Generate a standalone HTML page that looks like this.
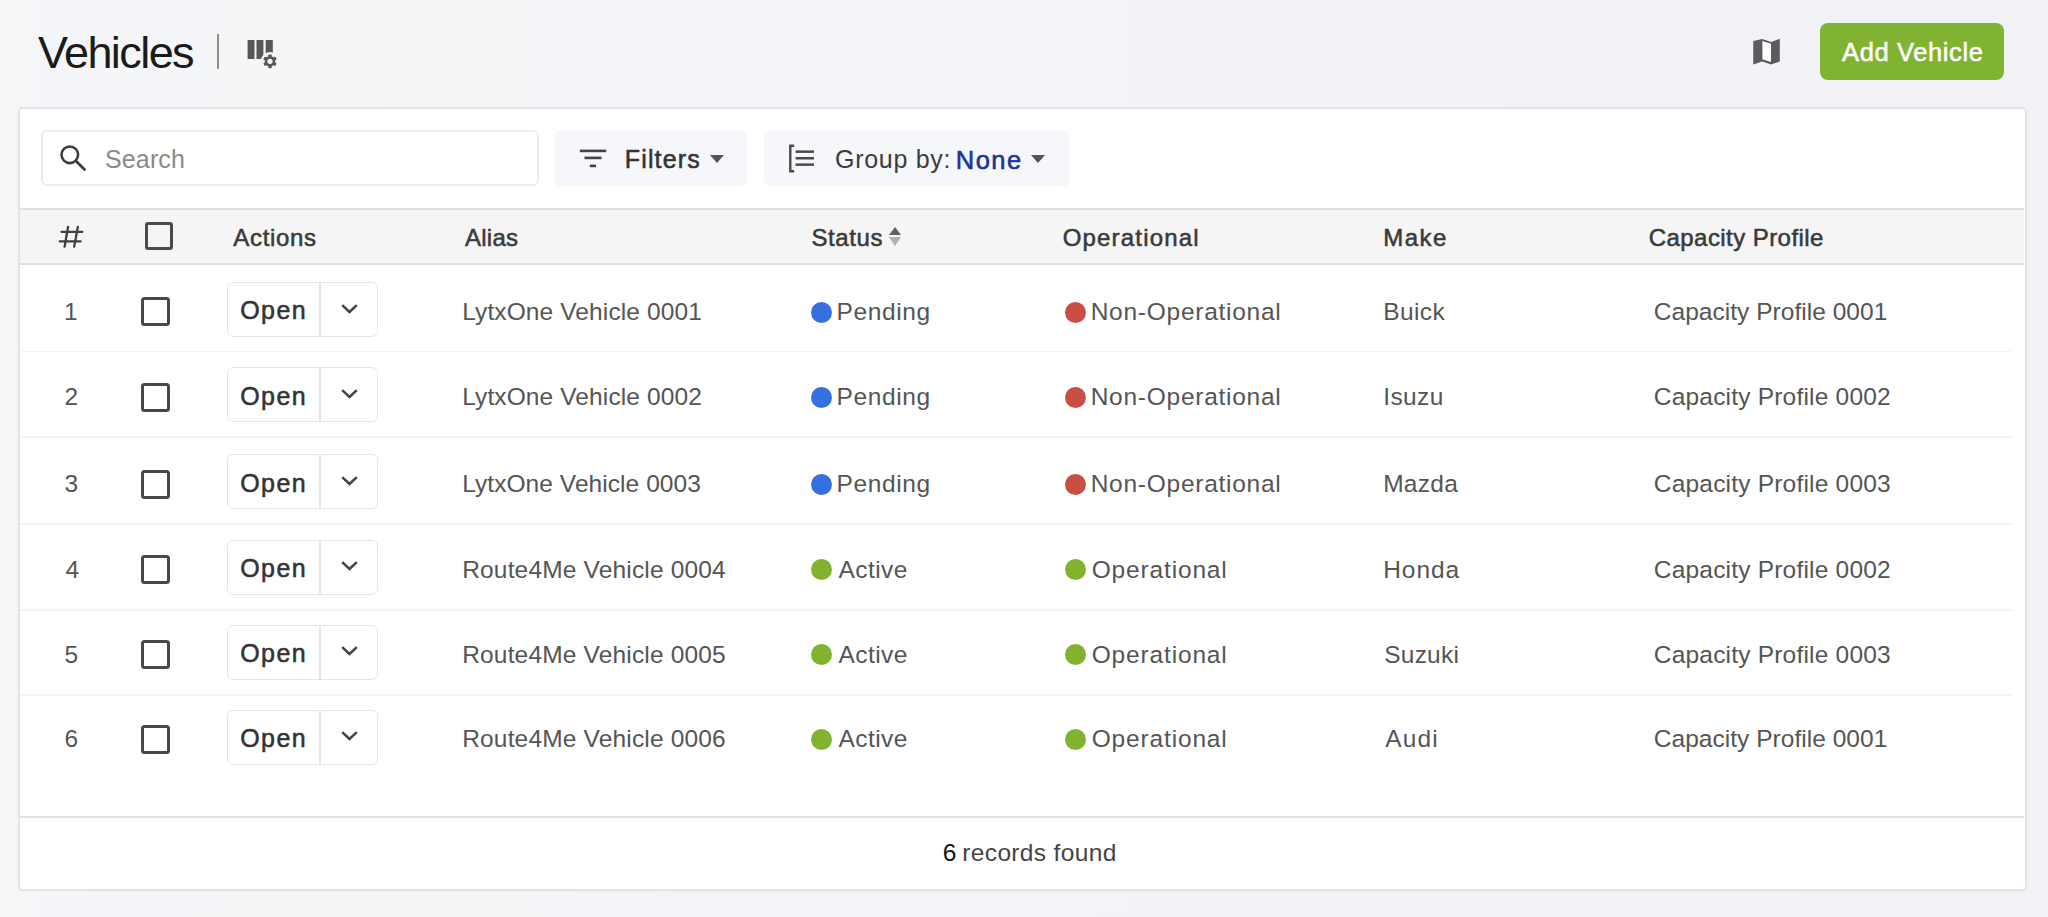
<!DOCTYPE html>
<html><head><meta charset="utf-8"><title>Vehicles</title>
<style>
html,body{margin:0;padding:0}
body{width:2048px;height:917px;overflow:hidden;position:relative;background:linear-gradient(90deg,#f5f6f8,#f1f2f6);font-family:"Liberation Sans",sans-serif}
.t{position:absolute;white-space:nowrap;line-height:1.117}
</style></head><body>
<div style="position:absolute;left:217px;top:34px;width:2px;height:35px;background:#8d8d8d"></div>
<svg style="position:absolute;left:245px;top:38px" width="36" height="34" viewBox="0 0 36 34">
<rect x="2.6" y="2" width="6.9" height="19" fill="#58585a"/><rect x="11.5" y="2" width="6.9" height="19" fill="#58585a"/><rect x="20.7" y="2" width="7.1" height="19" fill="#58585a"/>
<circle cx="25" cy="23.3" r="9.2" fill="#f5f6f8"/>
<g transform="translate(25,23.3)" fill="#58585a"><circle r="5.2"/><rect x="-1.7" y="-6.9" width="3.4" height="13.8" rx="0.8"/><rect x="-1.7" y="-6.9" width="3.4" height="13.8" rx="0.8" transform="rotate(60)"/><rect x="-1.7" y="-6.9" width="3.4" height="13.8" rx="0.8" transform="rotate(120)"/><circle r="2.6" fill="#f5f6f8"/></g>
</svg>
<svg style="position:absolute;left:1750px;top:35px" width="33" height="33" viewBox="0 0 33 33">
<path d="M3.25 6 L12.2 3.9 L21.1 6.9 L29.8 3.7 L29.8 26.6 L21.1 29.4 L12.2 26.6 L3.25 29.4 Z" fill="#5a5c62"/>
<path d="M12.4 5.9 L21 8.7 L21 27.1 L12.4 24.3 Z" fill="#fdfdfd"/>
</svg>
<div style="position:absolute;left:1820px;top:23px;width:184px;height:57px;border-radius:8px;background:#81b332"></div>
<div style="position:absolute;left:18px;top:107px;width:2005px;height:780px;border:2px solid #e3e4e8;border-radius:5px;background:#fff;box-shadow:0 1px 2px rgba(0,0,0,0.03)"></div>
<div style="position:absolute;left:41px;top:130px;width:494px;height:52px;border:2px solid #ececec;border-radius:6px;background:#fff"></div>
<svg style="position:absolute;left:56px;top:142px" width="34" height="32" viewBox="0 0 34 32">
<circle cx="13.8" cy="12.8" r="8.3" fill="none" stroke="#3d3d3d" stroke-width="2.6"/>
<line x1="20.5" y1="19.5" x2="28.5" y2="27.5" stroke="#3d3d3d" stroke-width="2.8" stroke-linecap="round"/>
</svg>
<div style="position:absolute;left:554px;top:130px;width:193px;height:56px;border-radius:6px;background:#f6f7fa"></div>
<svg style="position:absolute;left:578px;top:148px" width="30" height="21" viewBox="0 0 30 21">
<rect x="1.8" y="1.6" width="26.4" height="2.6" fill="#444"/><rect x="6.5" y="8.6" width="17" height="2.6" fill="#444"/><rect x="11.8" y="16.6" width="6.2" height="2.6" fill="#444"/>
</svg>
<svg style="position:absolute;left:710px;top:155px" width="14" height="8" viewBox="0 0 14 8"><path d="M0 0 L14 0 L7 8 Z" fill="#555"/></svg>
<div style="position:absolute;left:764px;top:130px;width:306px;height:56px;border-radius:6px;background:#f6f7fa"></div>
<svg style="position:absolute;left:787px;top:144px" width="30" height="30" viewBox="0 0 30 30">
<path d="M7.2 1.8 L3.3 1.8 L3.3 27.2 L7.2 27.2" fill="none" stroke="#4a4a4a" stroke-width="2.4"/>
<rect x="8.6" y="6.4" width="18.4" height="2.5" fill="#4a4a4a"/><rect x="8.6" y="13" width="18.4" height="2.5" fill="#4a4a4a"/><rect x="8.6" y="19.4" width="18.4" height="2.5" fill="#4a4a4a"/>
</svg>
<svg style="position:absolute;left:1031px;top:155px" width="14" height="8" viewBox="0 0 14 8"><path d="M0 0 L14 0 L7 8 Z" fill="#555"/></svg>
<div style="position:absolute;left:20px;top:208px;width:2004px;height:57px;background:#f5f5f5;border-top:2px solid #dfdfdf;border-bottom:2px solid #dfdfdf;box-sizing:border-box"></div>
<svg style="position:absolute;left:58px;top:225px" width="26" height="24" viewBox="0 0 26 24">
<g stroke="#3f3f3f" stroke-width="2.3" stroke-linecap="round" fill="none">
<line x1="10.1" y1="1.8" x2="6.6" y2="21.6"/><line x1="19.9" y1="1.8" x2="16.2" y2="21.6"/>
<line x1="3.5" y1="6.8" x2="24.3" y2="6.8"/><line x1="1.8" y1="16.4" x2="22.6" y2="16.4"/></g></svg>
<div style="position:absolute;left:144.5px;top:221.5px;width:22px;height:22px;border:3px solid #4a4a4a;border-radius:3px"></div>
<svg style="position:absolute;left:888px;top:226px" width="14" height="21" viewBox="0 0 14 21"><path d="M1 9 L7 1 L13 9 Z" fill="#606060"/><path d="M1 11 L13 11 L7 20 Z" fill="#b0b0b0"/></svg>
<div style="position:absolute;left:141px;top:297.3px;width:23px;height:23px;border:3px solid #484848;border-radius:3.5px"></div>
<div style="position:absolute;left:227px;top:282.1px;width:149px;height:53px;border:1.5px solid #e6e6e6;border-radius:6px;background:#fff"></div>
<div style="position:absolute;left:319px;top:283.1px;width:1.5px;height:53px;background:#e6e6e6"></div>
<svg style="position:absolute;left:340px;top:302.6px" width="19" height="11" viewBox="0 0 19 11"><path d="M2.2 2.2 L9.5 9 L16.8 2.2" fill="none" stroke="#444" stroke-width="2.5"/></svg>
<div style="position:absolute;left:811px;top:301.6px;width:21px;height:21px;border-radius:50%;background:#3570e0"></div>
<div style="position:absolute;left:1065px;top:301.6px;width:21px;height:21px;border-radius:50%;background:#c94f45"></div>
<div style="position:absolute;left:141px;top:382.6px;width:23px;height:23px;border:3px solid #484848;border-radius:3.5px"></div>
<div style="position:absolute;left:227px;top:367.4px;width:149px;height:53px;border:1.5px solid #e6e6e6;border-radius:6px;background:#fff"></div>
<div style="position:absolute;left:319px;top:368.4px;width:1.5px;height:53px;background:#e6e6e6"></div>
<svg style="position:absolute;left:340px;top:387.9px" width="19" height="11" viewBox="0 0 19 11"><path d="M2.2 2.2 L9.5 9 L16.8 2.2" fill="none" stroke="#444" stroke-width="2.5"/></svg>
<div style="position:absolute;left:811px;top:386.9px;width:21px;height:21px;border-radius:50%;background:#3570e0"></div>
<div style="position:absolute;left:1065px;top:386.9px;width:21px;height:21px;border-radius:50%;background:#c94f45"></div>
<div style="position:absolute;left:141px;top:469.6px;width:23px;height:23px;border:3px solid #484848;border-radius:3.5px"></div>
<div style="position:absolute;left:227px;top:454.4px;width:149px;height:53px;border:1.5px solid #e6e6e6;border-radius:6px;background:#fff"></div>
<div style="position:absolute;left:319px;top:455.4px;width:1.5px;height:53px;background:#e6e6e6"></div>
<svg style="position:absolute;left:340px;top:474.9px" width="19" height="11" viewBox="0 0 19 11"><path d="M2.2 2.2 L9.5 9 L16.8 2.2" fill="none" stroke="#444" stroke-width="2.5"/></svg>
<div style="position:absolute;left:811px;top:473.9px;width:21px;height:21px;border-radius:50%;background:#3570e0"></div>
<div style="position:absolute;left:1065px;top:473.9px;width:21px;height:21px;border-radius:50%;background:#c94f45"></div>
<div style="position:absolute;left:141px;top:555.1px;width:23px;height:23px;border:3px solid #484848;border-radius:3.5px"></div>
<div style="position:absolute;left:227px;top:539.9px;width:149px;height:53px;border:1.5px solid #e6e6e6;border-radius:6px;background:#fff"></div>
<div style="position:absolute;left:319px;top:540.9px;width:1.5px;height:53px;background:#e6e6e6"></div>
<svg style="position:absolute;left:340px;top:560.4px" width="19" height="11" viewBox="0 0 19 11"><path d="M2.2 2.2 L9.5 9 L16.8 2.2" fill="none" stroke="#444" stroke-width="2.5"/></svg>
<div style="position:absolute;left:811px;top:559.4px;width:21px;height:21px;border-radius:50%;background:#82b330"></div>
<div style="position:absolute;left:1065px;top:559.4px;width:21px;height:21px;border-radius:50%;background:#82b330"></div>
<div style="position:absolute;left:141px;top:640.0px;width:23px;height:23px;border:3px solid #484848;border-radius:3.5px"></div>
<div style="position:absolute;left:227px;top:624.8px;width:149px;height:53px;border:1.5px solid #e6e6e6;border-radius:6px;background:#fff"></div>
<div style="position:absolute;left:319px;top:625.8px;width:1.5px;height:53px;background:#e6e6e6"></div>
<svg style="position:absolute;left:340px;top:645.3px" width="19" height="11" viewBox="0 0 19 11"><path d="M2.2 2.2 L9.5 9 L16.8 2.2" fill="none" stroke="#444" stroke-width="2.5"/></svg>
<div style="position:absolute;left:811px;top:644.3px;width:21px;height:21px;border-radius:50%;background:#82b330"></div>
<div style="position:absolute;left:1065px;top:644.3px;width:21px;height:21px;border-radius:50%;background:#82b330"></div>
<div style="position:absolute;left:141px;top:724.7px;width:23px;height:23px;border:3px solid #484848;border-radius:3.5px"></div>
<div style="position:absolute;left:227px;top:709.5px;width:149px;height:53px;border:1.5px solid #e6e6e6;border-radius:6px;background:#fff"></div>
<div style="position:absolute;left:319px;top:710.5px;width:1.5px;height:53px;background:#e6e6e6"></div>
<svg style="position:absolute;left:340px;top:730.0px" width="19" height="11" viewBox="0 0 19 11"><path d="M2.2 2.2 L9.5 9 L16.8 2.2" fill="none" stroke="#444" stroke-width="2.5"/></svg>
<div style="position:absolute;left:811px;top:729.0px;width:21px;height:21px;border-radius:50%;background:#82b330"></div>
<div style="position:absolute;left:1065px;top:729.0px;width:21px;height:21px;border-radius:50%;background:#82b330"></div>
<div style="position:absolute;left:20px;top:350.7px;width:1992px;height:1.5px;background:#f4f4f4"></div>
<div style="position:absolute;left:20px;top:436.2px;width:1992px;height:1.5px;background:#f4f4f4"></div>
<div style="position:absolute;left:20px;top:523.0px;width:1992px;height:1.5px;background:#f4f4f4"></div>
<div style="position:absolute;left:20px;top:609.1px;width:1992px;height:1.5px;background:#f4f4f4"></div>
<div style="position:absolute;left:20px;top:694.3px;width:1992px;height:1.5px;background:#f4f4f4"></div>
<div style="position:absolute;left:20px;top:815.5px;width:2004px;height:2px;background:#e3e3e6"></div>
<div class="t" style="left:38.00px;top:27.87px;font-size:45px;font-weight:400;color:#1b1b1b;letter-spacing:-1.571px;">Vehicles</div>
<div class="t" style="left:1842.00px;top:38.22px;font-size:25.5px;font-weight:400;color:#ffffff;letter-spacing:0.620px;-webkit-text-stroke:0.55px #ffffff;">Add Vehicle</div>
<div class="t" style="left:105.00px;top:146.38px;font-size:25px;font-weight:400;color:#8a8a8a;letter-spacing:0.140px;">Search</div>
<div class="t" style="left:624.70px;top:146.18px;font-size:25px;font-weight:400;color:#333;letter-spacing:1.183px;-webkit-text-stroke:0.55px #333;">Filters</div>
<div class="t" style="left:835.10px;top:145.97px;font-size:25px;font-weight:400;color:#3c3c3c;letter-spacing:0.700px;">Group by:</div>
<div class="t" style="left:955.80px;top:145.72px;font-size:25.5px;font-weight:400;color:#1b3598;letter-spacing:1.467px;-webkit-text-stroke:0.6px #1b3598;">None</div>
<div class="t" style="left:233.30px;top:224.88px;font-size:24px;font-weight:400;color:#3a3a3a;letter-spacing:0.683px;-webkit-text-stroke:0.55px #3a3a3a;">Actions</div>
<div class="t" style="left:465.00px;top:224.88px;font-size:24px;font-weight:400;color:#3a3a3a;letter-spacing:0.250px;-webkit-text-stroke:0.55px #3a3a3a;">Alias</div>
<div class="t" style="left:811.50px;top:224.88px;font-size:24px;font-weight:400;color:#3a3a3a;letter-spacing:0.580px;-webkit-text-stroke:0.55px #3a3a3a;">Status</div>
<div class="t" style="left:1062.70px;top:224.88px;font-size:24px;font-weight:400;color:#3a3a3a;letter-spacing:1.180px;-webkit-text-stroke:0.55px #3a3a3a;">Operational</div>
<div class="t" style="left:1383.20px;top:224.88px;font-size:24px;font-weight:400;color:#3a3a3a;letter-spacing:1.500px;-webkit-text-stroke:0.55px #3a3a3a;">Make</div>
<div class="t" style="left:1648.80px;top:224.88px;font-size:24px;font-weight:400;color:#3a3a3a;letter-spacing:0.433px;-webkit-text-stroke:0.55px #3a3a3a;">Capacity Profile</div>
<div class="t" style="left:64.00px;top:297.93px;font-size:24.5px;font-weight:400;color:#555;letter-spacing:0.000px;">1</div>
<div class="t" style="left:240.30px;top:297.48px;font-size:25px;font-weight:400;color:#333;letter-spacing:1.367px;-webkit-text-stroke:0.55px #333;">Open</div>
<div class="t" style="left:462.20px;top:297.93px;font-size:24.5px;font-weight:400;color:#555;letter-spacing:0.116px;">LytxOne Vehicle 0001</div>
<div class="t" style="left:836.50px;top:297.93px;font-size:24.5px;font-weight:400;color:#555;letter-spacing:0.633px;">Pending</div>
<div class="t" style="left:1090.70px;top:297.93px;font-size:24.5px;font-weight:400;color:#555;letter-spacing:0.736px;">Non-Operational</div>
<div class="t" style="left:1383.20px;top:297.93px;font-size:24.5px;font-weight:400;color:#555;letter-spacing:0.400px;">Buick</div>
<div class="t" style="left:1653.80px;top:297.93px;font-size:24.5px;font-weight:400;color:#555;letter-spacing:0.030px;">Capacity Profile 0001</div>
<div class="t" style="left:64.50px;top:383.23px;font-size:24.5px;font-weight:400;color:#555;letter-spacing:0.000px;">2</div>
<div class="t" style="left:240.30px;top:382.77px;font-size:25px;font-weight:400;color:#333;letter-spacing:1.367px;-webkit-text-stroke:0.55px #333;">Open</div>
<div class="t" style="left:462.20px;top:383.23px;font-size:24.5px;font-weight:400;color:#555;letter-spacing:0.116px;">LytxOne Vehicle 0002</div>
<div class="t" style="left:836.50px;top:383.23px;font-size:24.5px;font-weight:400;color:#555;letter-spacing:0.633px;">Pending</div>
<div class="t" style="left:1090.70px;top:383.23px;font-size:24.5px;font-weight:400;color:#555;letter-spacing:0.736px;">Non-Operational</div>
<div class="t" style="left:1383.20px;top:383.23px;font-size:24.5px;font-weight:400;color:#555;letter-spacing:0.400px;">Isuzu</div>
<div class="t" style="left:1653.80px;top:383.23px;font-size:24.5px;font-weight:400;color:#555;letter-spacing:0.200px;">Capacity Profile 0002</div>
<div class="t" style="left:64.50px;top:470.23px;font-size:24.5px;font-weight:400;color:#555;letter-spacing:0.000px;">3</div>
<div class="t" style="left:240.30px;top:469.77px;font-size:25px;font-weight:400;color:#333;letter-spacing:1.367px;-webkit-text-stroke:0.55px #333;">Open</div>
<div class="t" style="left:462.20px;top:470.23px;font-size:24.5px;font-weight:400;color:#555;letter-spacing:0.063px;">LytxOne Vehicle 0003</div>
<div class="t" style="left:836.50px;top:470.23px;font-size:24.5px;font-weight:400;color:#555;letter-spacing:0.633px;">Pending</div>
<div class="t" style="left:1090.70px;top:470.23px;font-size:24.5px;font-weight:400;color:#555;letter-spacing:0.736px;">Non-Operational</div>
<div class="t" style="left:1383.20px;top:470.23px;font-size:24.5px;font-weight:400;color:#555;letter-spacing:0.275px;">Mazda</div>
<div class="t" style="left:1653.80px;top:470.23px;font-size:24.5px;font-weight:400;color:#555;letter-spacing:0.200px;">Capacity Profile 0003</div>
<div class="t" style="left:65.50px;top:555.73px;font-size:24.5px;font-weight:400;color:#555;letter-spacing:0.000px;">4</div>
<div class="t" style="left:240.30px;top:555.27px;font-size:25px;font-weight:400;color:#333;letter-spacing:1.367px;-webkit-text-stroke:0.55px #333;">Open</div>
<div class="t" style="left:462.20px;top:555.73px;font-size:24.5px;font-weight:400;color:#555;letter-spacing:0.170px;">Route4Me Vehicle 0004</div>
<div class="t" style="left:838.50px;top:555.73px;font-size:24.5px;font-weight:400;color:#555;letter-spacing:0.420px;">Active</div>
<div class="t" style="left:1091.70px;top:555.73px;font-size:24.5px;font-weight:400;color:#555;letter-spacing:0.840px;">Operational</div>
<div class="t" style="left:1383.20px;top:555.73px;font-size:24.5px;font-weight:400;color:#555;letter-spacing:0.950px;">Honda</div>
<div class="t" style="left:1653.80px;top:555.73px;font-size:24.5px;font-weight:400;color:#555;letter-spacing:0.200px;">Capacity Profile 0002</div>
<div class="t" style="left:64.50px;top:640.63px;font-size:24.5px;font-weight:400;color:#555;letter-spacing:0.000px;">5</div>
<div class="t" style="left:240.30px;top:640.17px;font-size:25px;font-weight:400;color:#333;letter-spacing:1.367px;-webkit-text-stroke:0.55px #333;">Open</div>
<div class="t" style="left:462.20px;top:640.63px;font-size:24.5px;font-weight:400;color:#555;letter-spacing:0.170px;">Route4Me Vehicle 0005</div>
<div class="t" style="left:838.50px;top:640.63px;font-size:24.5px;font-weight:400;color:#555;letter-spacing:0.420px;">Active</div>
<div class="t" style="left:1091.70px;top:640.63px;font-size:24.5px;font-weight:400;color:#555;letter-spacing:0.840px;">Operational</div>
<div class="t" style="left:1384.20px;top:640.63px;font-size:24.5px;font-weight:400;color:#555;letter-spacing:0.240px;">Suzuki</div>
<div class="t" style="left:1653.80px;top:640.63px;font-size:24.5px;font-weight:400;color:#555;letter-spacing:0.200px;">Capacity Profile 0003</div>
<div class="t" style="left:64.50px;top:725.33px;font-size:24.5px;font-weight:400;color:#555;letter-spacing:0.000px;">6</div>
<div class="t" style="left:240.30px;top:724.88px;font-size:25px;font-weight:400;color:#333;letter-spacing:1.367px;-webkit-text-stroke:0.55px #333;">Open</div>
<div class="t" style="left:462.20px;top:725.33px;font-size:24.5px;font-weight:400;color:#555;letter-spacing:0.170px;">Route4Me Vehicle 0006</div>
<div class="t" style="left:838.50px;top:725.33px;font-size:24.5px;font-weight:400;color:#555;letter-spacing:0.420px;">Active</div>
<div class="t" style="left:1091.70px;top:725.33px;font-size:24.5px;font-weight:400;color:#555;letter-spacing:0.840px;">Operational</div>
<div class="t" style="left:1385.20px;top:725.33px;font-size:24.5px;font-weight:400;color:#555;letter-spacing:1.133px;">Audi</div>
<div class="t" style="left:1653.80px;top:725.33px;font-size:24.5px;font-weight:400;color:#555;letter-spacing:0.030px;">Capacity Profile 0001</div>
<div class="t" style="left:942.75px;top:839.43px;font-size:24.5px;font-weight:400;color:#111;letter-spacing:0.000px;">6</div>
<div class="t" style="left:962.30px;top:839.43px;font-size:24.5px;font-weight:400;color:#444;letter-spacing:0.350px;">records found</div>
</body></html>
